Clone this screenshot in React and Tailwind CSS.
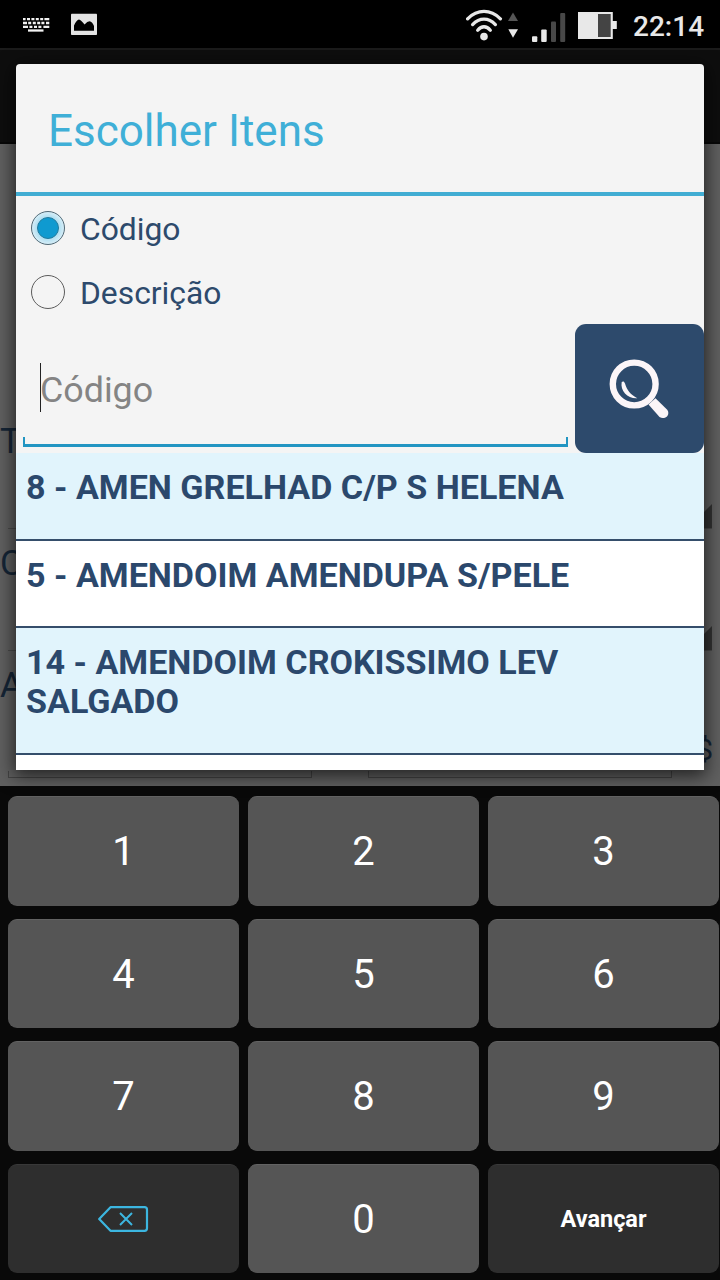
import { useState } from 'react'

const ITEMS = [
  { code: 8, name: 'AMEN GRELHAD C/P S HELENA', size: 'h-[88px]' },
  { code: 5, name: 'AMENDOIM AMENDUPA S/PELE', size: 'h-[87px]' },
  { code: 14, name: 'AMENDOIM CROKISSIMO LEV SALGADO', size: 'h-[127px]' },
]

const DIGITS = ['1', '2', '3', '4', '5', '6', '7', '8', '9']

const KeyboardIcon = () => (
  <svg width="28" height="16" viewBox="0 0 28 16" fill="none" stroke="#f2f2f2" strokeWidth="2.3">
    <path d="M1 3.2H3.6M5 3.2H8M9.4 3.2h3M13.8 3.2h3M18.2 3.2h3M22.4 3.2H27.3" />
    <path d="M1 7H5M6.2 7h3M10.8 7h3M15.2 7h3M19.4 7h3M24 7H27.3" />
    <path d="M1 10.8H6M7.4 10.8h3M12 10.8h3M16.4 10.8h3M21.4 10.8H27.3" />
    <path d="M6 14.5H21.5" />
  </svg>
)

const PictureIcon = () => (
  <svg width="26" height="22" viewBox="0 0 26 22">
    <rect y="0.8" width="26" height="21.2" rx="0.8" fill="#e4e4e4" />
    <path d="M3 17.8V12.5Q5.5 7 8 6.5Q10 7 13.5 11.5Q16.5 8.3 18.5 8.2Q21.5 9 23 13V17.8Z" fill="#000" />
  </svg>
)

const StatusIcons = () => (
  <svg width="152" height="36" viewBox="0 -1 152 36">
    <g fill="none" stroke="#e8e8e8" strokeWidth="3.3" strokeLinecap="round">
      <path d="M1.6 11.8C11.5 2 24.5 2 34.4 11.8" />
      <path d="M6.6 17.6C13.5 10.4 22.5 10.4 29.4 17.6" />
      <path d="M11.7 23.2C15.5 18.6 20.5 18.6 24.3 23.2" />
    </g>
    <circle cx="18" cy="29.6" r="3.8" fill="#e8e8e8" />
    <path d="M47 5.5L52 14H42Z" fill="#555" />
    <path d="M42.3 22.2H52L47 30.7Z" fill="#e8e8e8" />
    <rect x="66" y="29.3" width="5.3" height="5.7" rx="1" fill="#e8e8e8" />
    <rect x="75.2" y="22.5" width="5.5" height="12.4" rx="1" fill="#e8e8e8" />
    <rect x="85" y="14.5" width="5" height="20.4" rx="1" fill="#484848" />
    <rect x="94.2" y="6" width="5" height="28.9" rx="1" fill="#484848" />
    <rect x="112" y="5" width="34.8" height="27" fill="#e8e8e8" />
    <rect x="132" y="7" width="12.7" height="23" fill="#444" />
    <rect x="146" y="14" width="4.8" height="8" fill="#e8e8e8" />
  </svg>
)

const SearchIcon = () => (
  <svg width="62" height="62" viewBox="0 0 62 62">
    <circle cx="25.2" cy="26" r="21.4" fill="none" stroke="#fbf5f8" strokeWidth="6.4" />
    <path d="M12.7 24C14 23 15.2 23.3 16 25.5C17.8 32 21.5 36.5 28.3 40.3C19 41 11 33 12.7 24Z" fill="#fbf5f8" />
    <path d="M39.5 46.5L46.5 40.2L58.2 51.7C62 56.8 55.5 62.6 50.5 59Z" fill="#fbf5f8" />
  </svg>
)

const BackspaceIcon = () => (
  <svg width="52" height="26" viewBox="0 0 52 26" fill="none" stroke="#3cb6e0" strokeWidth="2.2" strokeLinejoin="round">
    <path d="M12.5 1.2H46.5Q49 1.2 49 3.7V22.3Q49 24.8 46.5 24.8H12.5L1.2 13Z" />
    <path d="M22 7L34 19M34 7L22 19" strokeWidth="2" />
  </svg>
)

const Radio = ({ label, checked, onSelect }) => (
  <button type="button" role="radio" aria-checked={checked} onClick={onSelect} className="flex h-16 w-full items-center gap-[15px] pl-[15px] text-left">
    <span className={`flex size-[34px] items-center justify-center rounded-full border ${checked ? 'border-[#4f6470] bg-[#d5edf7]' : 'border-[#5c5c5c]'}`}>
      {checked && <span className="size-[22px] rounded-full border border-[#237b9d] bg-[#0f9ad0] shadow-[0_0_4px_2px_#a8dcf0]" />}
    </span>
    <span className="pt-[4px] text-[31.8px] leading-none text-[#2d4a6c]">{label}</span>
  </button>
)

const Key = ({ children, dark, onClick }) => (
  <button type="button" onClick={onClick} className={`flex items-center justify-center rounded-[9px] border-t text-[40px] text-white ${dark ? 'border-[#383838] bg-[#2e2e2e]' : 'border-[#626262] bg-[#555555]'}`}>
    {children}
  </button>
)

const FormField = ({ label }) => (
  <div className="relative h-[122px] text-[35px] leading-[41px] text-[#152536]">
    {label}
    <div className="absolute right-2 bottom-[14px] left-2 border-b border-[#4a4a4a]" />
    <svg className="absolute right-2 bottom-[15px]" width="24" height="24" viewBox="0 0 24 24">
      <path d="M24 0V24H0Z" fill="#333" />
    </svg>
  </div>
)

// Order form that stays dimmed under the dialog
const DimmedForm = () => (
  <div className="h-[642px] overflow-hidden bg-[#606060] pt-[277px]">
    <FormField label="T" />
    <FormField label="C" />
    <div className="text-[35px] leading-[41px] text-[#152536]">A</div>
    <div className="flex h-[65px] items-end justify-end pr-[7px] text-[29px] leading-[41px] text-[#152536]">$</div>
    <div className="flex gap-14 pl-2">
      <div className="h-[7px] w-[304px] border border-t-0 border-[#444]" />
      <div className="h-[7px] w-[304px] border border-t-0 border-[#444]" />
    </div>
  </div>
)

const App = () => {
  const [mode, setMode] = useState('Código')
  const [query, setQuery] = useState('')

  return (
    <div className="relative flex h-[1280px] w-[720px] flex-col overflow-hidden bg-black font-['Roboto',sans-serif]">
      <header className="flex h-12 items-center bg-black">
        <div className="flex items-center gap-[21px] pl-[22px]">
          <KeyboardIcon />
          <PictureIcon />
        </div>
        <div className="ml-auto flex items-center gap-[15px] pr-4">
          <StatusIcons />
          <span className="mt-[5px] w-[71px] text-[28px] leading-none font-medium text-[#e8e8e8]">22:14</span>
        </div>
      </header>

      <div className="h-24 border-t-2 border-b-2 border-t-[#1b1b1b] border-b-[#080808] bg-[#0e0e0e]" />
      <DimmedForm />

      <div className="absolute top-16 left-4 flex h-[706px] w-[688px] flex-col overflow-hidden rounded-t-[4px] bg-[#f4f4f4] shadow-[0_4px_18px_2px_rgba(0,0,0,0.65)]">
        <h1 className="flex h-[132px] shrink-0 items-center border-b-4 border-[#41add3] pt-[6px] pl-8 text-[44px] leading-none text-[#3fafd7]">Escolher Itens</h1>
        <div role="radiogroup" className="shrink-0">
          <Radio label="Código" checked={mode === 'Código'} onSelect={() => setMode('Código')} />
          <Radio label="Descrição" checked={mode === 'Descrição'} onSelect={() => setMode('Descrição')} />
        </div>
        <div className="flex h-[129px] shrink-0">
          <div className="flex w-[559px] flex-col px-[7px]">
            <div className="flex h-[113px] items-center pt-[14px] pl-[17px]">
              <span className="-mr-px h-[49px] w-px bg-[#222]" />
              <span className={`pt-[6px] text-[35.8px] leading-none ${query ? 'text-[#222]' : 'text-[#848484]'}`}>{query || mode}</span>
            </div>
            <div className="h-[10px] border-x-2 border-b-3 border-[#2295c2]" />
          </div>
          <button type="button" aria-label="Buscar" className="flex size-[129px] items-center justify-center rounded-[11px] bg-[#2d4a6c]">
            <SearchIcon />
          </button>
        </div>
        <ul>
          {ITEMS.map((item, i) => (
            <li key={item.code} className={`border-b-2 border-[#354e6b] px-[10px] pt-[15px] text-[34.1px] leading-[39px] font-bold text-[#2b486c] ${item.size} ${i % 2 ? 'bg-white' : 'bg-[#e1f4fc]'}`}>
              {`${item.code} - ${item.name}`}
            </li>
          ))}
        </ul>
        <div className="flex-1 bg-white" />
      </div>

      <div className="grid h-[494px] grid-cols-3 grid-rows-4 gap-x-[9px] gap-y-[13px] bg-[#090909] pt-[10px] pr-px pb-[7px] pl-2">
        {DIGITS.map(d => (
          <Key key={d} onClick={() => setQuery(query + d)}><span className="pt-[2px]">{d}</span></Key>
        ))}
        <Key dark onClick={() => setQuery(query.slice(0, -1))}><BackspaceIcon /></Key>
        <Key onClick={() => setQuery(query + '0')}><span className="pt-[2px]">0</span></Key>
        <Key dark><span className="pt-px text-[23.5px] font-bold">Avançar</span></Key>
      </div>
    </div>
  )
}

export default App
